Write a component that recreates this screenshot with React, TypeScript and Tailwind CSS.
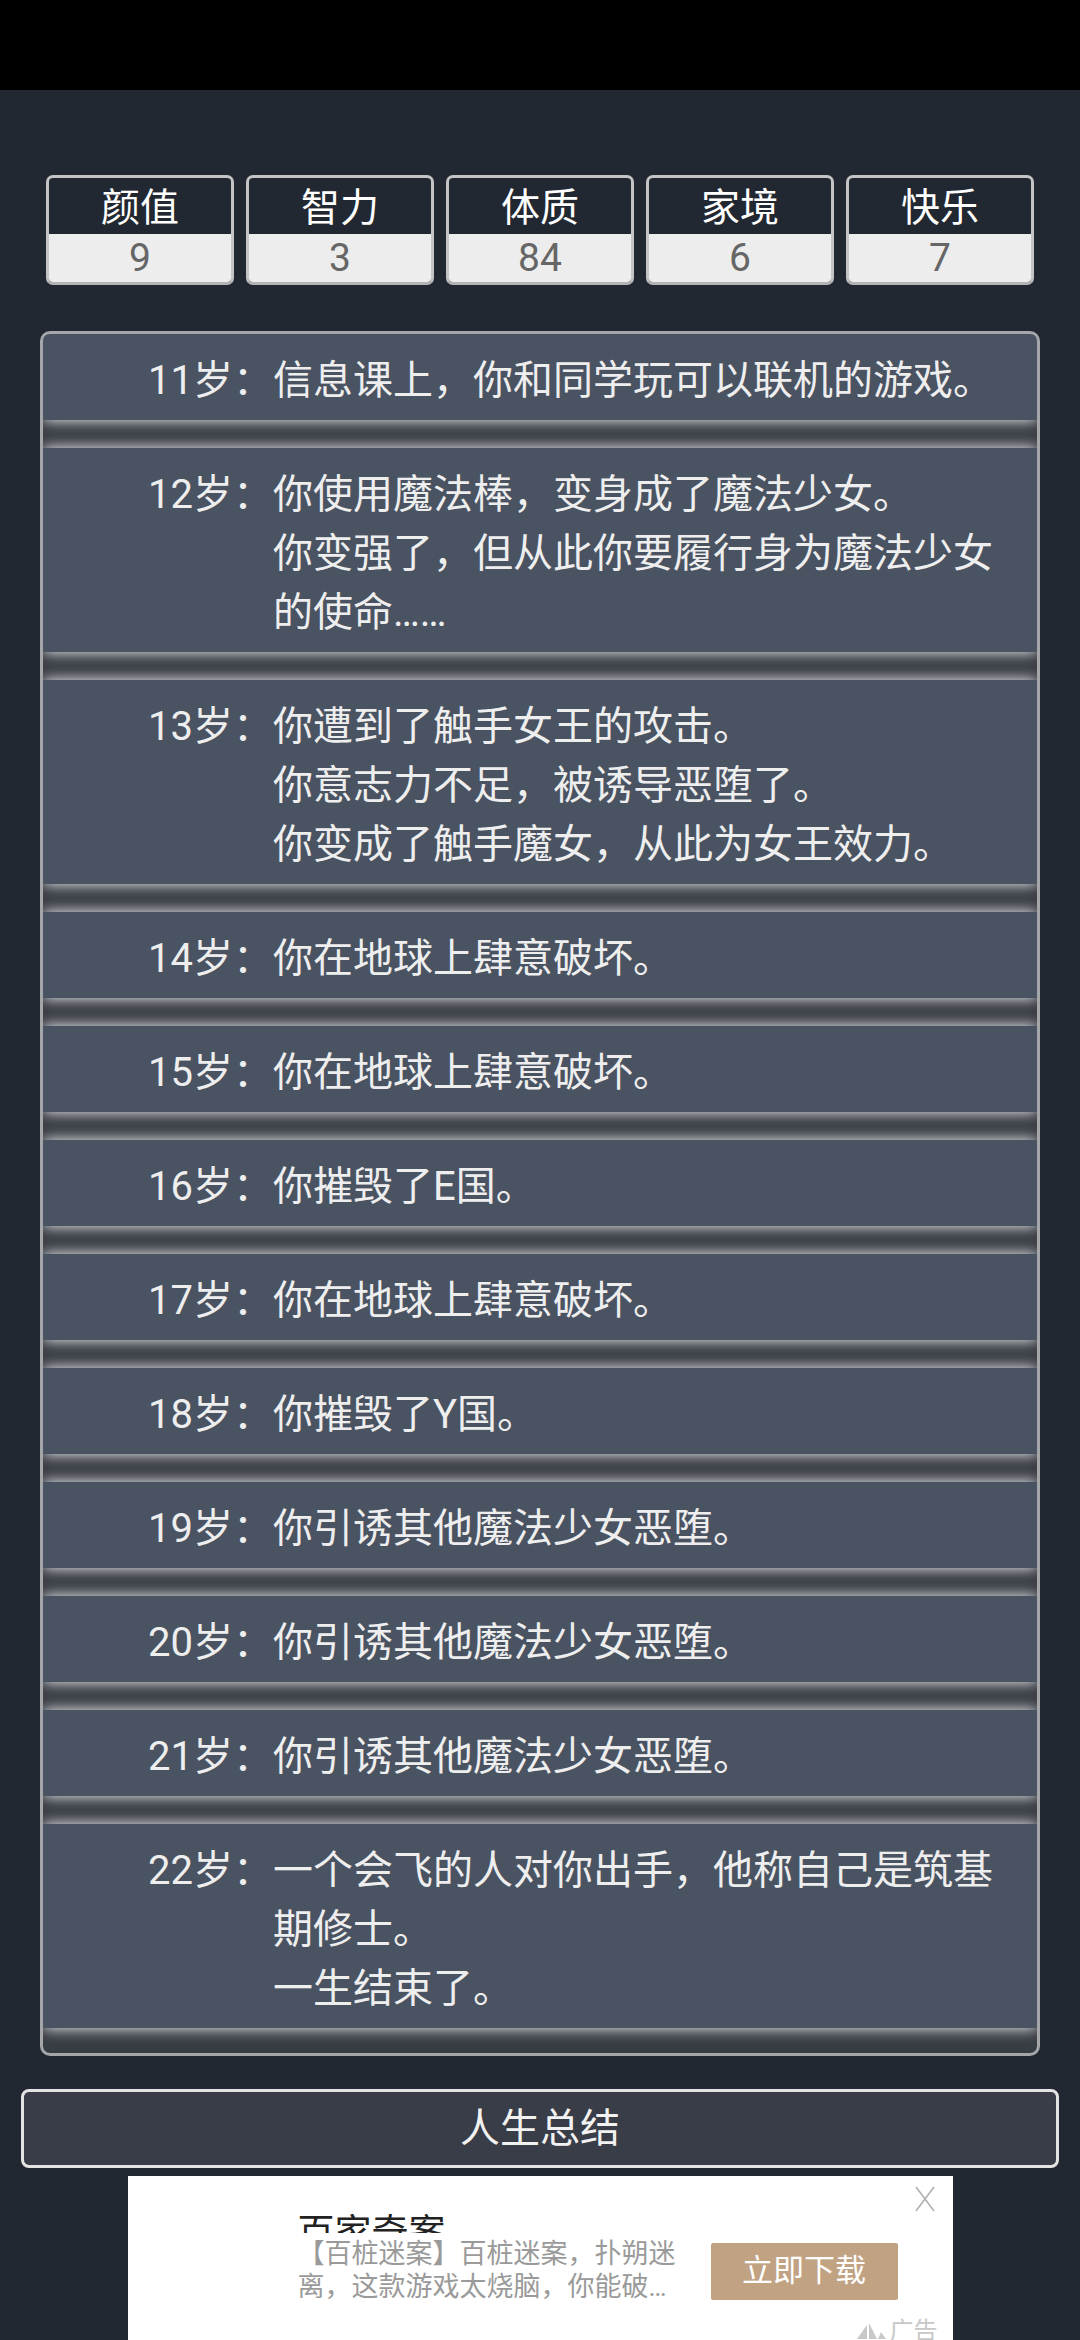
const stats = [
    { label: '颜值', value: '9' },
    { label: '智力', value: '3' },
    { label: '体质', value: '84' },
    { label: '家境', value: '6' },
    { label: '快乐', value: '7' },
]

const events = [
    { age: 11, lines: ['信息课上，你和同学玩可以联机的游戏。'] },
    { age: 12, lines: ['你使用魔法棒，变身成了魔法少女。', '你变强了，但从此你要履行身为魔法少女的使命……'] },
    { age: 13, lines: ['你遭到了触手女王的攻击。', '你意志力不足，被诱导恶堕了。', '你变成了触手魔女，从此为女王效力。'] },
    { age: 14, lines: ['你在地球上肆意破坏。'] },
    { age: 15, lines: ['你在地球上肆意破坏。'] },
    { age: 16, lines: ['你摧毁了E国。'] },
    { age: 17, lines: ['你在地球上肆意破坏。'] },
    { age: 18, lines: ['你摧毁了Y国。'] },
    { age: 19, lines: ['你引诱其他魔法少女恶堕。'] },
    { age: 20, lines: ['你引诱其他魔法少女恶堕。'] },
    { age: 21, lines: ['你引诱其他魔法少女恶堕。'] },
    { age: 22, lines: ['一个会飞的人对你出手，他称自己是筑基期修士。', '一生结束了。'] },
]

const font = 'font-[Roboto,"Noto_Sans_CJK_SC",sans-serif]'

const StatBox: React.FC<{ label: string, value: string }> = ({ label, value }) => {
    return (
        <div className="w-[188px] h-[110px] border-[3px] border-[#c4c4c4] border-b-[#b4b4b4] rounded-[7px] overflow-hidden flex flex-col">
            <div className="h-[56px] flex items-center justify-center pt-[5px] text-[39px] leading-none text-white">{label}</div>
            <div className="flex-1 flex items-center justify-center pt-[1px] bg-[#ededed] text-[39px] leading-none text-[#666]">{value}</div>
        </div>
    )
}

export default function App() {
    return (
        <div className={`w-[1080px] h-[2340px] overflow-hidden bg-[#222831] flex flex-col ${font}`}>
            <div className="h-[90px] bg-black shrink-0"></div>

            {/* attributes */}
            <div className="flex shrink-0 gap-[12px] px-[46px] mt-[85px]">
                {stats.map((s) => <StatBox key={s.label} label={s.label} value={s.value} />)}
            </div>

            {/* life trajectory */}
            <div className="shrink-0 mx-[40px] mt-[46px] border-[3px] border-[#a4a6a9] rounded-[10px] bg-[#383c43] overflow-hidden flex flex-col gap-[28px] pb-[25px]">
                {events.map((e) => (
                    <div key={e.age} className="flex bg-[#4a5362] pt-[17px] pb-[10px] pr-[24px] text-[40px] leading-[59px] text-[#eeeeee] shadow-[0_0_14px_rgba(250,252,255,1)]">
                        <span className="w-[230px] shrink-0 text-right">{e.age}岁：</span>
                        <div className="flex-1 flex flex-col">
                            {e.lines.map((l, i) => <span key={i}>{l}</span>)}
                        </div>
                    </div>
                ))}
            </div>

            <button className="mx-[21px] mt-[33px] h-[79px] shrink-0 border-[3px] border-[#e4e4e4] rounded-[8px] bg-[#393d47] text-[40px] text-[#f2f2f2] flex items-center justify-center">
                人生总结
            </button>

            {/* ad */}
            <div className="relative mt-[8px] mx-auto w-[825px] h-[170px] shrink-0 bg-white overflow-hidden flex pl-[170px] pt-[37px] gap-[34px]">
                <div className="w-[379px] flex flex-col">
                    <div className="h-[21px] overflow-hidden text-[37px] leading-[44px] text-[#222] -mt-[1px]">百家奇案</div>
                    <p className="mt-[5px] text-[27px] leading-[33px] text-[#9a9a9a] line-clamp-2">【百桩迷案】百桩迷案，扑朔迷离，这款游戏太烧脑，你能破解所有谜题吗？</p>
                </div>
                <div className="mt-[30px] w-[187px] h-[57px] bg-[#c1a283] rounded-[2px] flex items-center justify-center text-[31px] text-white">立即下载</div>
                <svg className="absolute right-[17px] top-[10px]" width="22" height="26" viewBox="0 0 22 26">
                    <path d="M2 1 L20 25 M20 1 L2 25" stroke="#b0b0b0" strokeWidth="1.6" fill="none" />
                </svg>
                <div className="absolute right-[15px] bottom-[-3px] flex items-center gap-[3px] text-[24px] text-[#c8c8c8]">
                    <svg width="32" height="18" viewBox="0 0 32 18">
                        <path d="M2 17 L12 3 L12 17 Z" fill="#c8c8c8" />
                        <path d="M14 17 L14 1 L22 17 Z" fill="#c8c8c8" />
                        <path d="M23 17 L26 10 L31 17 Z" fill="#c8c8c8" />
                    </svg>
                    <span>广告</span>
                </div>
            </div>
        </div>
    )
}
